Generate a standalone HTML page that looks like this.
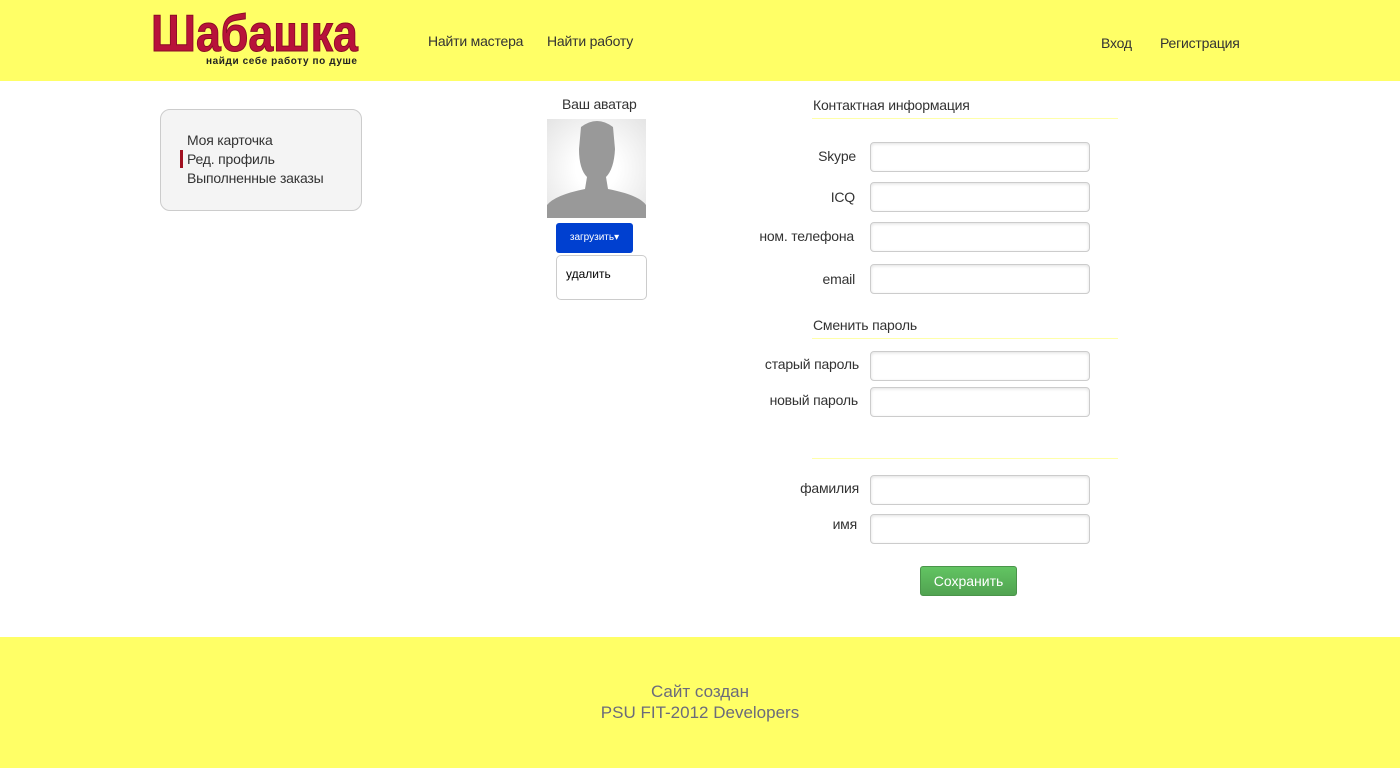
<!DOCTYPE html>
<html><head><meta charset="utf-8"><style>
body{margin:0;width:1400px;height:768px;background:#fff;font-family:"Liberation Sans",sans-serif;color:#333;position:relative;overflow:hidden}
.a{position:absolute}
.hdr{left:0;top:0;width:1400px;height:81px;background:#ffff66}
.ftr{left:0;top:637px;width:1400px;height:131px;background:#ffff66;text-align:center;color:#6b6b7b;font-size:17px}
.nav{font-size:14px;color:#333;letter-spacing:-0.2px}
.inp{width:218px;height:28px;border:1px solid #ccc;border-radius:4px;background:#fff;box-shadow:inset 0 1px 3px rgba(0,0,0,.12)}
.lbl{font-size:14px;text-align:right;width:110px;letter-spacing:-0.2px}
.line{height:1px;background:#ffffaa;width:306px}
</style></head><body>
<div class="a hdr"></div>
<div class="a" style="left:151px;top:8px;font-weight:bold;font-size:52px;color:#b8123a;line-height:52px;transform-origin:0 0;transform:scaleX(0.86);-webkit-text-stroke:1px #8a0c25">Шабашка</div>
<div class="a" style="left:206px;top:56px;font-size:10px;font-weight:bold;color:#222;letter-spacing:0.6px">найди себе работу по душе</div>
<div class="a nav" style="left:428px;top:33px">Найти мастера</div>
<div class="a nav" style="left:547px;top:33px">Найти работу</div>
<div class="a nav" style="left:1101px;top:35px">Вход</div>
<div class="a nav" style="left:1160px;top:35px">Регистрация</div>

<div class="a" style="left:160px;top:109px;width:200px;height:100px;background:#f4f4f4;border:1px solid #ccc;border-radius:10px"></div>
<div class="a" style="left:187px;top:131px;font-size:14px;line-height:19px;letter-spacing:-0.2px">Моя карточка<br>Ред. профиль<br>Выполненные заказы</div>
<div class="a" style="left:180px;top:150px;width:3px;height:18px;background:#a01020"></div>

<div class="a" style="left:562px;top:96px;font-size:14px;letter-spacing:-0.2px">Ваш аватар</div>
<div class="a" style="left:547px;top:119px;width:99px;height:99px;background:radial-gradient(circle,#fff 30%,#e4e4e4);overflow:hidden">
<svg width="99" height="99"><path d="M34 8 Q50 -4 66 8 L68 30 Q67 50 59 58 L61 70 Q92 76 99 86 L99 99 L0 99 L0 86 Q8 76 38 70 L40 58 Q32 50 32 30 Z" fill="#999"/></svg></div>
<div class="a" style="left:556px;top:223px;width:77px;height:30px;background:#0040d0;border-radius:3px;color:#fff;font-size:10px;line-height:30px;text-align:center">загрузить▾</div>
<div class="a" style="left:556px;top:255px;width:89px;height:43px;border:1px solid #ccc;border-radius:5px;font-size:12px;color:#000"><div style="padding:11px 0 0 9px">удалить</div></div>

<div class="a" style="left:813px;top:97px;font-size:14px;letter-spacing:-0.2px">Контактная информация</div>
<div class="a line" style="left:812px;top:118px"></div>
<div class="a lbl" style="left:746px;top:148px">Skype</div><div class="a inp" style="left:870px;top:142px"></div>
<div class="a lbl" style="left:745px;top:189px">ICQ</div><div class="a inp" style="left:870px;top:182px"></div>
<div class="a lbl" style="left:744px;top:228px">ном. телефона</div><div class="a inp" style="left:870px;top:222px"></div>
<div class="a lbl" style="left:745px;top:271px">email</div><div class="a inp" style="left:870px;top:264px"></div>
<div class="a" style="left:813px;top:317px;font-size:14px;letter-spacing:-0.2px">Сменить пароль</div>
<div class="a line" style="left:812px;top:338px"></div>
<div class="a lbl" style="left:749px;top:356px">старый пароль</div><div class="a inp" style="left:870px;top:351px"></div>
<div class="a lbl" style="left:748px;top:392px">новый пароль</div><div class="a inp" style="left:870px;top:387px"></div>
<div class="a line" style="left:812px;top:458px"></div>
<div class="a lbl" style="left:749px;top:480px">фамилия</div><div class="a inp" style="left:870px;top:475px"></div>
<div class="a lbl" style="left:747px;top:516px">имя</div><div class="a inp" style="left:870px;top:514px"></div>
<div class="a" style="left:920px;top:566px;width:95px;height:28px;background:linear-gradient(#62c462,#51a351);border:1px solid #4a944a;border-radius:3px;color:#fff;font-size:14px;line-height:28px;text-align:center">Сохранить</div>

<div class="a ftr"><div style="padding-top:44px;line-height:21px">Сайт создан<br>PSU FIT-2012 Developers</div></div>
</body></html>
